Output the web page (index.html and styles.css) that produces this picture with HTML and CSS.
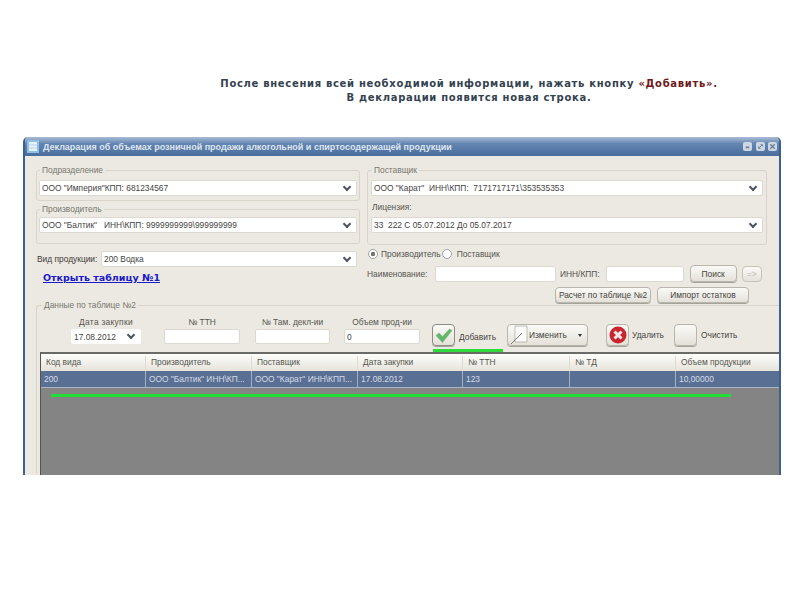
FILE: index.html
```html
<!DOCTYPE html>
<html lang="ru">
<head>
    <meta charset="UTF-8">
    <meta name="viewport" content="width=device-width, initial-scale=1.0">
    <title>Декларация</title>
    <link rel="stylesheet" href="styles.css">
</head>
<body>

<div class="caption">
    <p>После внесения всей необходимой информации, нажать кнопку <span class="caption-accent">«Добавить».</span></p>
    <p>В декларации появится новая строка.</p>
</div>

<div class="window">
    <div class="titlebar">
        <svg class="title-icon" width="12" height="13" viewBox="0 0 12 13">
            <rect x="0" y="0" width="12" height="13" fill="#8fc0e4"/>
            <rect x="2" y="2" width="8" height="9" fill="#e6f1f8"/>
            <path d="M2 5h8M2 8h8" stroke="#b4d4ec" stroke-width="1"/>
        </svg>
        <span class="title-text">Декларация об объемах розничной продажи алкогольной и спиртосодержащей продукции</span>
        <div class="title-buttons">
            <span class="title-btn"><svg viewBox="0 0 10 10"><path d="M3 6h4" stroke="#6d7f94" stroke-width="2"/></svg></span>
            <span class="title-btn"><svg viewBox="0 0 10 10"><path d="M3 7l4-4M5 3h2v2M3 5v2h2" stroke="#6d7f94" fill="none"/></svg></span>
            <span class="title-btn"><svg viewBox="0 0 10 10"><path d="M2.500 2.500l5 5M7.500 2.500l-5 5" stroke="#6d7f94" stroke-width="1.500"/></svg></span>
        </div>
    </div>

    <div class="content">
        <div class="top-grid">
            <div class="left-col">
                <fieldset class="group group-first">
                    <legend>Подразделение</legend>
                    <div class="combo"><span>ООО "Империя"КПП: 681234567</span><span class="chev"></span></div>
                </fieldset>
                <fieldset class="group group-maker">
                    <legend>Производитель</legend>
                    <div class="combo"><span>ООО "Балтик" &nbsp; ИНН\КПП: 9999999999\999999999</span><span class="chev"></span></div>
                </fieldset>
                <div class="product-row">
                    <span class="product-label">Вид продукции:</span>
                    <div class="combo combo-product"><span>200 Водка</span><span class="chev"></span></div>
                </div>
                <a class="table-link" href="#">Открыть таблицу №1</a>
            </div>

            <div class="right-col">
                <fieldset class="group group-first group-supplier">
                    <legend>Поставщик</legend>
                    <div class="combo"><span>ООО "Карат" &nbsp;ИНН\КПП: &nbsp;7171717171\353535353</span><span class="chev"></span></div>
                    <div class="inner-label">Лицензия:</div>
                    <div class="combo"><span>33 &nbsp;222 С 05.07.2012 До 05.07.2017</span><span class="chev"></span></div>
                </fieldset>
                <div class="radio-row">
                    <span class="radio radio-on"></span><span>Производитель</span>
                    <span class="radio"></span><span>Поставщик</span>
                </div>
                <div class="search-row">
                    <span class="search-name">Наименование:</span>
                    <div class="input search-input-name"></div>
                    <span>ИНН/КПП:</span>
                    <div class="input search-input-inn"></div>
                    <div class="btn btn-search">Поиск</div>
                    <div class="btn btn-go">=&gt;</div>
                </div>
                <div class="action-row">
                    <div class="btn btn-calc">Расчет по таблице №2</div>
                    <div class="btn btn-import">Импорт остатков</div>
                </div>
            </div>
        </div>

        <fieldset class="group data-group">
            <legend>Данные по таблице №2</legend>
            <div class="form-row">
                <div class="field field-date">
                    <label>Дата закупки</label>
                    <div class="input date-input"><span>17.08.2012</span><span class="chev"></span></div>
                </div>
                <div class="field field-ttn">
                    <label>№ ТТН</label>
                    <div class="input"></div>
                </div>
                <div class="field field-customs">
                    <label>№ Там. декл-ии</label>
                    <div class="input"></div>
                </div>
                <div class="field field-volume">
                    <label>Объем прод-ии</label>
                    <div class="input">0</div>
                </div>
                <div class="tools">
                    <div class="tool-add">
                        <div class="btn btn-icon btn-active">
                            <svg width="18" height="15" viewBox="0 0 18 15"><path d="M1 7.500l3-2.500 3.500 3.500 7-7.500 2.500 1.500-9.500 12z" fill="#62b866" stroke="#7fb486" stroke-width="0.600"/></svg>
                        </div>
                        <span>Добавить</span>
                    </div>
                    <div class="btn btn-edit">
                        <svg width="18" height="20" viewBox="0 0 18 20"><path d="M5 1h12v16H5z" fill="#fbfbf9" stroke="#a5a59f" stroke-width="0.700"/><path d="M1 19L12 8" stroke="#77776f" stroke-width="1"/></svg>
                        <span class="edit-label">Изменить</span>
                        <span class="edit-arrow"></span>
                    </div>
                    <div class="btn btn-icon btn-delete">
                        <svg width="18" height="18" viewBox="0 0 18 18"><circle cx="9" cy="9" r="8.500" fill="#c9252f"/><path d="M5.500 5.500l7 7M12.500 5.500l-7 7" stroke="#f7e8e8" stroke-width="3"/></svg>
                    </div>
                    <span class="delete-label">Удалить</span>
                    <div class="btn btn-icon btn-clear"></div>
                    <span class="clear-label">Очистить</span>
                </div>
            </div>

            <div class="table">
                <div class="table-head">
                    <span>Код вида</span>
                    <span>Производитель</span>
                    <span>Поставщик</span>
                    <span>Дата закупки</span>
                    <span>№ ТТН</span>
                    <span>№ ТД</span>
                    <span>Объем продукции</span>
                </div>
                <div class="table-row">
                    <span>200</span>
                    <span>ООО "Балтик" ИНН\КП...</span>
                    <span>ООО "Карат" ИНН\КПП...</span>
                    <span>17.08.2012</span>
                    <span>123</span>
                    <span></span>
                    <span>10,00000</span>
                </div>
                <div class="table-empty">
                    <div class="green-line"></div>
                </div>
            </div>
        </fieldset>
    </div>
</div>

</body>
</html>
```

FILE: styles.css
```css
body {
    margin: 0;
    background: #fff;
    font-family: "Liberation Sans", Arial, sans-serif;
    font-size: 8.400px;
    color: #55554f;
}

.caption {
    height: 137px;
    box-sizing: border-box;
    padding: 77px 0 0 138px;
    text-align: center;
    font-family: "DejaVu Sans", sans-serif;
    font-size: 10px;
    font-weight: bold;
    line-height: 14px;
    letter-spacing: 0.69px;
    color: #33424f;
}
.caption p {
    margin: 0;
}
.caption-accent {
    color: #6e1a20;
}

.window {
    width: 758px;
    height: 338px;
    margin-left: 23px;
    box-sizing: border-box;
    overflow: hidden;
    background: #ece9e2;
    border-left: 2px solid #3f5f8e;
    border-right: 2px solid #3f5f8e;
    border-radius: 5px 5px 0 0;
}

.titlebar {
    height: 19px;
    display: flex;
    align-items: center;
    padding: 0 2px 0 2px;
    background: linear-gradient(#a9bdd4, #6486b2 35%, #4a6c9c);
}
.title-icon {
    margin-right: 4px;
}
.title-text {
    flex: 1;
    font-size: 9px;
    font-weight: bold;
    color: #dfe5ee;
}
.title-buttons {
    display: flex;
    gap: 3.500px;
}
.title-btn {
    display: block;
    width: 9px;
    height: 9px;
    border-radius: 2px;
    background: #ccd7e3;
}
.title-btn svg {
    display: block;
    width: 9px;
    height: 9px;
}

.content {
    padding-left: 11px;
}

.top-grid {
    display: grid;
    grid-template-columns: 324px 400px;
    column-gap: 7px;
    padding-top: 9px;
}

.group {
    margin: 0;
    padding: 0 2px;
    min-width: 0;
    border: 1px solid #d8d4ca;
    border-radius: 3px;
}
.group legend {
    padding: 0 2px;
    margin-left: 1px;
    line-height: 11px;
    color: #77776f;
}
.group-first {
    padding-top: 4px;
    padding-bottom: 4px;
}
.group-maker {
    margin-top: 3px;
    padding-top: 2px;
    padding-bottom: 10px;
}
.group-supplier {
    padding: 4px 3px 11px;
}
.inner-label {
    height: 21px;
    line-height: 22px;
    padding-left: 1px;
}

.combo, .input {
    box-sizing: border-box;
    height: 16px;
    display: flex;
    align-items: center;
    justify-content: space-between;
    padding: 0 4px 0 2px;
    background: #fff;
    border: 1px solid #dcd9d0;
    border-radius: 2px;
    color: #45453f;
}
.chev {
    width: 4px;
    height: 4px;
    margin: -3px 2px 0 0;
    border-right: 2px solid #4c5560;
    border-bottom: 2px solid #4c5560;
    transform: rotate(45deg);
}

.product-row {
    display: flex;
    align-items: center;
    margin-top: 7px;
    padding-left: 1px;
}
.product-label {
    width: 64px;
    white-space: nowrap;
    color: #3c3c38;
}
.combo-product {
    width: 256px;
}
.table-link {
    display: inline-block;
    margin: 4px 0 0 7px;
    font-family: "DejaVu Sans", sans-serif;
    font-size: 9.500px;
    font-weight: bold;
    line-height: 13px;
    color: #1a1ac8;
}

.radio-row {
    display: flex;
    align-items: center;
    height: 12px;
    margin-top: 3px;
    padding-left: 1px;
}
.radio {
    box-sizing: border-box;
    width: 10px;
    height: 10px;
    margin-right: 3px;
    border: 1px solid #a0a5ab;
    border-radius: 50%;
    background: #fff;
}
.radio-on {
    background: radial-gradient(circle, #77776f 0 2px, #fff 2.500px);
}
.radio-row .radio:nth-of-type(3) {
    margin-left: 1px;
    margin-right: 5px;
}

.search-row {
    display: flex;
    align-items: center;
    height: 17px;
    margin-top: 5px;
}
.search-name {
    width: 68px;
    white-space: nowrap;
}
.search-input-name {
    width: 121px;
    margin-right: 4px;
}
.search-input-inn {
    width: 78px;
    margin: 0 6px 0 6px;
}

.btn {
    box-sizing: border-box;
    display: flex;
    align-items: center;
    justify-content: center;
    border: 1px solid #b8b5ac;
    border-radius: 4px;
    background: linear-gradient(#fbfaf7, #e4e1d9);
    box-shadow: 0 1px 0 #a5a299;
    color: #45453f;
    white-space: nowrap;
}
.btn-search {
    width: 47px;
    height: 17px;
}
.btn-go {
    width: 20px;
    height: 16px;
    margin-left: 5px;
    border-color: #c6c3ba;
    box-shadow: none;
    color: #bdbab2;
}
.action-row {
    display: flex;
    height: 16px;
    margin-top: 5px;
    padding-left: 188px;
}
.btn-calc {
    width: 96px;
}
.btn-import {
    width: 92px;
    margin-left: 6px;
}

.data-group {
    margin-top: -1px;
    padding: 0 0 0 3px;
    border-right: 0;
    border-bottom: 0;
    border-radius: 3px 0 0 0;
}
.data-group legend {
    line-height: 7px;
    margin-left: 2px;
}

.form-row {
    display: flex;
    height: 37px;
    padding-top: 8px;
    box-sizing: border-box;
    padding-left: 31px;
}
.field {
    text-align: center;
}
.field label {
    display: block;
    height: 12px;
    line-height: 11px;
    white-space: nowrap;
}
.field .input {
    height: 15px;
    text-align: left;
}
.field-date {
    width: 70px;
}
.field-date label {
    letter-spacing: 0.3px;
}
.date-input {
    border-color: transparent;
    padding-left: 2px;
}
.field-ttn {
    width: 76px;
    margin-left: 23px;
}
.field-customs {
    width: 75px;
    margin-left: 15px;
}
.field-volume {
    width: 76px;
    margin-left: 14px;
}

.tools {
    display: flex;
    align-items: center;
    height: 22px;
    margin: 7px 0 0 12px;
    color: #45453f;
}
.tool-add {
    position: relative;
    display: flex;
    align-items: center;
    width: 75px;
}
.tool-add span {
    margin: 4px 0 0 4px;
}
.tool-add::after {
    content: "";
    position: absolute;
    left: 1px;
    top: 25px;
    width: 70px;
    height: 3px;
    background: #2edb3a;
}
.btn-icon {
    width: 23px;
    height: 22px;
    flex: none;
}
.btn-active {
    border: 1px solid #8a8d83;
}
.btn-edit {
    width: 81px;
    height: 22px;
    justify-content: flex-start;
    padding-left: 2px;
}
.edit-label {
    margin-left: 1px;
}
.edit-arrow {
    margin-left: 11px;
    border-left: 2px solid transparent;
    border-right: 2px solid transparent;
    border-top: 3px solid #333;
}
.btn-delete {
    margin-left: 18px;
}
.delete-label {
    width: 42px;
    padding-left: 3px;
    box-sizing: border-box;
}
.btn-clear {
    margin-left: 3px;
}
.clear-label {
    margin-left: 4px;
}

.table {
    margin-top: 6px;
    height: 122px;
    border-top: 2px solid #6a6a66;
    border-left: 1px solid #55554f;
    margin-bottom: -2px;
}
.table-head, .table-row {
    display: grid;
    grid-template-columns: 105px 106px 106px 105px 107px 106px 103px;
    align-items: center;
}
.table-head {
    height: 17px;
    background: linear-gradient(#fdfdfb, #e6e3da);
}
.table-head span {
    padding-left: 5px;
    line-height: 13px;
    border-right: 1px solid #dedbd2;
}
.table-head span:last-child, .table-row span:last-child {
    border-right: 0;
}
.table-row {
    height: 17px;
    background: #596f94;
    border-bottom: 1px solid #aab5c6;
    box-sizing: border-box;
    color: #d5dbe5;
}
.table-row span {
    height: 100%;
    line-height: 16px;
    padding-left: 3px;
    border-right: 1px solid #a3afc2;
    white-space: nowrap;
    overflow: hidden;
}
.table-empty {
    height: 87px;
    padding: 6px 0 0 10px;
    box-sizing: border-box;
    background: #848484;
}
.green-line {
    width: 680px;
    height: 3px;
    background: #22dd33;
}
```
